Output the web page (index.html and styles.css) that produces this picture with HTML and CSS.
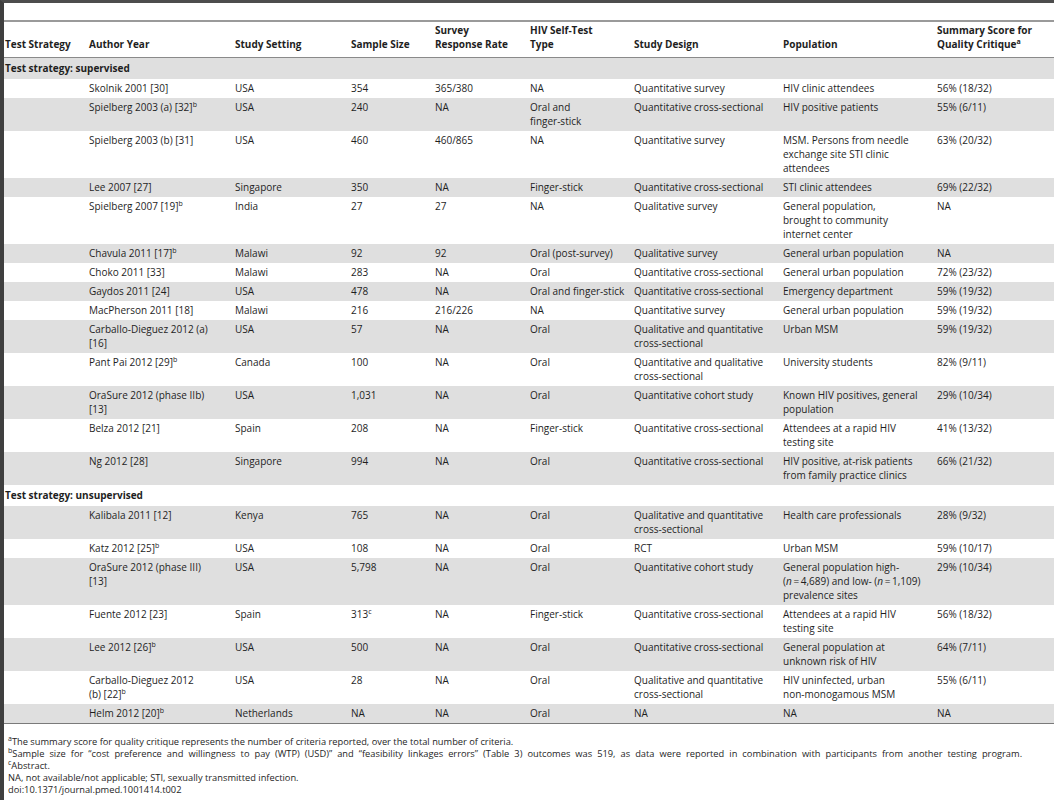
FILE: index.html
```html
<!DOCTYPE html>
<html lang="en">
<head>
    <meta charset="UTF-8">
    <meta name="viewport" content="width=device-width, initial-scale=1.0">
    <title>Table 2. Characteristics of included studies</title>
    <link rel="stylesheet" href="styles.css">
</head>
<body>
    <div class="page">
        <table class="study-table">
            <colgroup>
                <col class="c-strategy">
                <col class="c-author">
                <col class="c-setting">
                <col class="c-size">
                <col class="c-rate">
                <col class="c-type">
                <col class="c-design">
                <col class="c-pop">
                <col class="c-score">
            </colgroup>
            <thead>
                <tr>
                    <th>Test Strategy</th>
                    <th>Author Year</th>
                    <th>Study Setting</th>
                    <th>Sample Size</th>
                    <th>Survey<br>Response Rate</th>
                    <th>HIV Self-Test<br>Type</th>
                    <th>Study Design</th>
                    <th>Population</th>
                    <th>Summary Score for<br>Quality Critique<sup>a</sup></th>
                </tr>
            </thead>
            <tbody>
                <tr class="group"><td colspan="9">Test strategy: supervised</td></tr>
                <tr><td></td><td>Skolnik 2001 [30]</td><td>USA</td><td>354</td><td>365/380</td><td>NA</td><td>Quantitative survey</td><td>HIV clinic attendees</td><td>56% (18/32)</td></tr>
                <tr><td></td><td>Spielberg 2003 (a) [32]<sup>b</sup></td><td>USA</td><td>240</td><td>NA</td><td>Oral and<br>finger-stick</td><td>Quantitative cross-sectional</td><td>HIV positive patients</td><td>55% (6/11)</td></tr>
                <tr><td></td><td>Spielberg 2003 (b) [31]</td><td>USA</td><td>460</td><td>460/865</td><td>NA</td><td>Quantitative survey</td><td>MSM. Persons from needle exchange site STI clinic attendees</td><td>63% (20/32)</td></tr>
                <tr><td></td><td>Lee 2007 [27]</td><td>Singapore</td><td>350</td><td>NA</td><td>Finger-stick</td><td>Quantitative cross-sectional</td><td>STI clinic attendees</td><td>69% (22/32)</td></tr>
                <tr><td></td><td>Spielberg 2007 [19]<sup>b</sup></td><td>India</td><td>27</td><td>27</td><td>NA</td><td>Qualitative survey</td><td>General population,<br>brought to community<br>internet center</td><td>NA</td></tr>
                <tr><td></td><td>Chavula 2011 [17]<sup>b</sup></td><td>Malawi</td><td>92</td><td>92</td><td>Oral (post-survey)</td><td>Qualitative survey</td><td>General urban population</td><td>NA</td></tr>
                <tr><td></td><td>Choko 2011 [33]</td><td>Malawi</td><td>283</td><td>NA</td><td>Oral</td><td>Quantitative cross-sectional</td><td>General urban population</td><td>72% (23/32)</td></tr>
                <tr><td></td><td>Gaydos 2011 [24]</td><td>USA</td><td>478</td><td>NA</td><td>Oral and finger-stick</td><td>Quantitative cross-sectional</td><td>Emergency department</td><td>59% (19/32)</td></tr>
                <tr><td></td><td>MacPherson 2011 [18]</td><td>Malawi</td><td>216</td><td>216/226</td><td>NA</td><td>Quantitative survey</td><td>General urban population</td><td>59% (19/32)</td></tr>
                <tr><td></td><td>Carballo-Dieguez 2012 (a) [16]</td><td>USA</td><td>57</td><td>NA</td><td>Oral</td><td>Qualitative and quantitative cross-sectional</td><td>Urban MSM</td><td>59% (19/32)</td></tr>
                <tr><td></td><td>Pant Pai 2012 [29]<sup>b</sup></td><td>Canada</td><td>100</td><td>NA</td><td>Oral</td><td>Quantitative and qualitative cross-sectional</td><td>University students</td><td>82% (9/11)</td></tr>
                <tr><td></td><td>OraSure 2012 (phase IIb) [13]</td><td>USA</td><td>1,031</td><td>NA</td><td>Oral</td><td>Quantitative cohort study</td><td>Known HIV positives, general population</td><td>29% (10/34)</td></tr>
                <tr><td></td><td>Belza 2012 [21]</td><td>Spain</td><td>208</td><td>NA</td><td>Finger-stick</td><td>Quantitative cross-sectional</td><td>Attendees at a rapid HIV testing site</td><td>41% (13/32)</td></tr>
                <tr><td></td><td>Ng 2012 [28]</td><td>Singapore</td><td>994</td><td>NA</td><td>Oral</td><td>Quantitative cross-sectional</td><td>HIV positive, at-risk patients from family practice clinics</td><td>66% (21/32)</td></tr>
                <tr class="group"><td colspan="9">Test strategy: unsupervised</td></tr>
                <tr><td></td><td>Kalibala 2011 [12]</td><td>Kenya</td><td>765</td><td>NA</td><td>Oral</td><td>Qualitative and quantitative cross-sectional</td><td>Health care professionals</td><td>28% (9/32)</td></tr>
                <tr><td></td><td>Katz 2012 [25]<sup>b</sup></td><td>USA</td><td>108</td><td>NA</td><td>Oral</td><td>RCT</td><td>Urban MSM</td><td>59% (10/17)</td></tr>
                <tr><td></td><td>OraSure 2012 (phase III) [13]</td><td>USA</td><td>5,798</td><td>NA</td><td>Oral</td><td>Quantitative cohort study</td><td>General population high-<br><span class="nowrap">(<i>n</i>&#8201;=&#8201;4,689) and low- (<i>n</i>&#8201;=&#8201;1,109)</span><br>prevalence sites</td><td>29% (10/34)</td></tr>
                <tr><td></td><td>Fuente 2012 [23]</td><td>Spain</td><td>313<sup>c</sup></td><td>NA</td><td>Finger-stick</td><td>Quantitative cross-sectional</td><td>Attendees at a rapid HIV testing site</td><td>56% (18/32)</td></tr>
                <tr><td></td><td>Lee 2012 [26]<sup>b</sup></td><td>USA</td><td>500</td><td>NA</td><td>Oral</td><td>Quantitative cross-sectional</td><td>General population at unknown risk of HIV</td><td>64% (7/11)</td></tr>
                <tr><td></td><td>Carballo-Dieguez 2012<br>(b) [22]<sup>b</sup></td><td>USA</td><td>28</td><td>NA</td><td>Oral</td><td>Qualitative and quantitative cross-sectional</td><td>HIV uninfected, urban <span class="nowrap">non-monogamous</span> MSM</td><td>55% (6/11)</td></tr>
                <tr><td></td><td>Helm 2012 [20]<sup>b</sup></td><td>Netherlands</td><td>NA</td><td>NA</td><td>Oral</td><td>NA</td><td>NA</td><td>NA</td></tr>
            </tbody>
        </table>
        <div class="notes">
            <p><sup>a</sup>The summary score for quality critique represents the number of criteria reported, over the total number of criteria.</p>
            <p class="spread"><sup>b</sup>Sample size for &ldquo;cost preference and willingness to pay (WTP) (USD)&rdquo; and &ldquo;feasibility linkages errors&rdquo; (Table 3) outcomes was 519, as data were reported in combination with participants from another testing program.</p>
            <p><sup>c</sup>Abstract.</p>
            <p>NA, not available/not applicable; STI, sexually transmitted infection.</p>
            <p>doi:10.1371/journal.pmed.1001414.t002</p>
        </div>
    </div>
</body>
</html>
```

FILE: styles.css
```css
body {
    margin: 0;
    font-family: 'Open Sans', 'Liberation Sans', sans-serif;
    font-size: 10px;
    color: #1e1e1e;
    background: #ffffff;
}

.page {
    min-height: 797px;
    border-top: 3px solid #4d4d4d;
    border-left: 4px solid #3f3f3f;
    padding-top: 17px;
}

.study-table {
    width: 100%;
    border-collapse: collapse;
    table-layout: fixed;
    border-top: 2px solid #9a9a9a;
    border-bottom: 1px solid #7a7a7a;
}

.c-strategy { width: 84px; }
.c-author { width: 146px; }
.c-setting { width: 116px; }
.c-size { width: 84px; }
.c-rate { width: 95px; }
.c-type { width: 104px; }
.c-design { width: 149px; }
.c-pop { width: 154px; }

.study-table th {
    font-weight: 700;
    text-align: left;
    vertical-align: bottom;
    line-height: 14px;
    padding: 1px 4px 6px 1px;
    border-bottom: 1px solid #8a8a8a;
}

.study-table td {
    text-align: left;
    vertical-align: top;
    line-height: 14px;
    padding: 2px 8px 3px 1px;
}

.study-table td:nth-child(2) {
    padding-right: 21px;
}

.study-table td:nth-child(8) {
    padding-right: 13px;
}

.study-table tbody tr:nth-child(odd) {
    background-color: #dfdfdf;
}

.study-table .group td {
    font-weight: 700;
    padding-top: 3px;
    padding-bottom: 4px;
}

.nowrap {
    white-space: nowrap;
}

sup {
    font-size: 7px;
    line-height: 0;
    vertical-align: 4px;
}

.notes {
    padding: 12px 0 0 4px;
    font-size: 9.3px;
    line-height: 12px;
}

.notes p {
    margin: 0;
}

.notes .spread {
    white-space: nowrap;
    word-spacing: 2.6px;
}
```
